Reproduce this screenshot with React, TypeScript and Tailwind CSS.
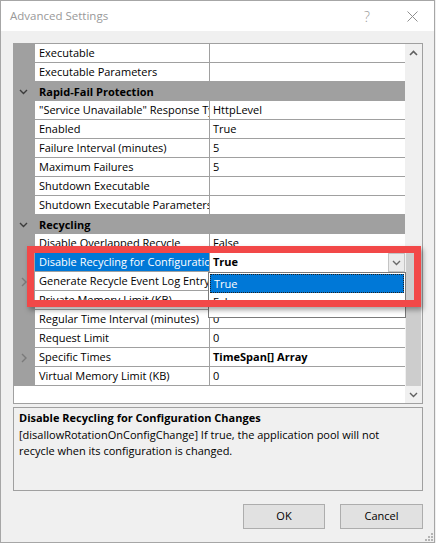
import React from "react";

type Row = {
  name: string;
  value?: string;
  header?: boolean;
  bold?: boolean;
  expand?: boolean;
  selected?: boolean;
};

// property grid rows, top to bottom
const rows: Row[] = [
  { name: "Executable", value: "" },
  { name: "Executable Parameters", value: "" },
  { name: "Rapid-Fail Protection", header: true },
  { name: '"Service Unavailable" Response Type', value: "HttpLevel" },
  { name: "Enabled", value: "True" },
  { name: "Failure Interval (minutes)", value: "5" },
  { name: "Maximum Failures", value: "5" },
  { name: "Shutdown Executable", value: "" },
  { name: "Shutdown Executable Parameters", value: "" },
  { name: "Recycling", header: true },
  { name: "Disable Overlapped Recycle", value: "False" },
  { name: "Disable Recycling for Configuration Changes", value: "True", selected: true },
  { name: "Generate Recycle Event Log Entry", value: "", expand: true },
  { name: "Private Memory Limit (KB)", value: "0" },
  { name: "Regular Time Interval (minutes)", value: "0" },
  { name: "Request Limit", value: "0" },
  { name: "Specific Times", value: "TimeSpan[] Array", bold: true, expand: true },
  { name: "Virtual Memory Limit (KB)", value: "0" },
];

const ChevronDown = ({ color = "#3c3c3c" }: { color?: string }) => (
  <svg width="9" height="6" viewBox="0 0 9 6">
    <polyline points="1,1 4.5,4.5 8,1" fill="none" stroke={color} strokeWidth="1.4" />
  </svg>
);

const ChevronUp = ({ color = "#606060" }: { color?: string }) => (
  <svg width="9" height="6" viewBox="0 0 9 6">
    <polyline points="1,5 4.5,1.5 8,5" fill="none" stroke={color} strokeWidth="1.6" />
  </svg>
);

const ChevronRight = () => (
  <svg width="6" height="10" viewBox="0 0 6 10">
    <polyline points="1,1 5,5 1,9" fill="none" stroke="#7a7a7a" strokeWidth="1.4" />
  </svg>
);

function GridRow({ row }: { row: Row }) {
  if (row.header) {
    return (
      <div className="flex h-[19px] items-center bg-[#a0a0a0]">
        <div className="flex w-[21px] shrink-0 justify-center pr-[3px]">
          <ChevronDown />
        </div>
        <div className="pl-[4px] font-bold leading-[18px] text-black">{row.name}</div>
      </div>
    );
  }
  return (
    <div className="flex h-[19px]">
      <div className="flex w-[21px] shrink-0 items-center justify-center bg-[#a0a0a0] pr-[2px]">
        {row.expand && <ChevronRight />}
      </div>
      <div
        className={`w-[174px] shrink-0 overflow-hidden whitespace-nowrap border-b border-[#a0a0a0] pl-[4px] leading-[18px] ${
          row.selected ? "bg-[#0078d7] text-white" : "bg-white text-black"
        }`}
      >
        {row.name}
      </div>
      {row.selected ? (
        <div className="flex w-[196px] shrink-0 border-l border-[#a0a0a0] bg-white">
          <div className="flex-1 pl-[3px] font-bold leading-[18px] text-black">{row.value}</div>
          <div className="mb-[-1px] flex h-[19px] w-[17px] items-center justify-center border border-[#c4c4c4] bg-[#ebebeb]">
            <ChevronDown color="#6a6a6a" />
          </div>
        </div>
      ) : (
        <div
          className={`w-[196px] shrink-0 overflow-hidden whitespace-nowrap border-b border-l border-[#a0a0a0] bg-white pl-[3px] leading-[18px] text-black ${
            row.bold ? "font-bold" : ""
          }`}
        >
          {row.value}
        </div>
      )}
    </div>
  );
}

export default function App() {
  return (
    <div className="h-[543px] w-[436px] overflow-hidden bg-[#f0f0f0] font-['Open_Sans',sans-serif] text-[11px]">
      <div className="relative flex h-[543px] w-[435px] flex-col border border-[#a6a6a6] bg-[#f0f0f0]">
        {/* title bar */}
        <div className="flex h-[30px] shrink-0 items-center bg-white pl-[9px]">
          <div className="flex-1 text-[11.5px] text-[#999999]">Advanced Settings</div>
          <div className="mr-[37px] text-[14px] font-light text-[#9a9a9a]">?</div>
          <svg width="11" height="11" viewBox="0 0 11 11" className="mr-[16px]">
            <line x1="0.5" y1="0.5" x2="10.5" y2="10.5" stroke="#8f8f8f" strokeWidth="1" />
            <line x1="10.5" y1="0.5" x2="0.5" y2="10.5" stroke="#8f8f8f" strokeWidth="1" />
          </svg>
        </div>

        <div className="flex flex-1 flex-col pl-[12px] pr-[11px] pt-[12px]">
          {/* property grid */}
          <div className="flex h-[361px] w-[410px] border border-[#a0a0a0] bg-white">
            <div className="flex w-[391px] flex-col">
              {rows.map((r) => (
                <GridRow key={r.name} row={r} />
              ))}
              <div className="flex-1 bg-white" />
            </div>
            <div className="flex w-[17px] flex-col bg-[#f0f0f0]">
              <div className="flex h-[17px] items-center justify-center">
                <ChevronUp />
              </div>
              <div className="h-[189px]" />
              <div className="mx-[1px] h-[136px] bg-[#cdcdcd]" />
              <div className="flex flex-1 items-center justify-center">
                <ChevronDown color="#606060" />
              </div>
            </div>
          </div>

          {/* description */}
          <div className="mt-[3px] h-[84px] w-[410px] border border-[#a0a0a0] bg-[#f0f0f0] px-[5px] pt-[1px] text-black">
            <div className="whitespace-nowrap font-bold leading-[18px]">
              Disable Recycling for Configuration Changes
            </div>
            <div className="whitespace-nowrap leading-[16px]">
              [disallowRotationOnConfigChange] If true, the application pool will not
            </div>
            <div className="whitespace-nowrap leading-[16px]">recycle when its configuration is changed.</div>
          </div>

          {/* buttons */}
          <div className="mt-[13px] flex w-[410px] justify-end gap-[15px]">
            <button className="h-[25px] w-[82px] border border-[#adadad] bg-[#e1e1e1] text-black">OK</button>
            <button className="h-[25px] w-[83px] border border-[#adadad] bg-[#e1e1e1] text-black">Cancel</button>
          </div>
        </div>

        {/* dropdown list of the active editor */}
        <div className="absolute left-[207px] top-[271px] h-[46px] w-[198px] border border-[#7a7a7a] bg-white text-[11px]">
          <div className="mx-[1px] mt-[1px] h-[19px] border border-dotted border-[#222] bg-[#0078d7] pl-[3px] leading-[17px] text-white">
            True
          </div>
          <div className="pl-[4px] leading-[18px] text-black">False</div>
        </div>

        {/* red highlight box */}
        <div className="absolute left-[26px] top-[245px] h-[61px] w-[394px] border-[7px] border-[#f24848] shadow-[2px_3px_5px_rgba(0,0,0,0.35)]" />

        {/* resize grip */}
        <svg width="9" height="9" viewBox="0 0 9 9" className="absolute bottom-[1px] right-[1px]">
          <rect x="7" y="1" width="2" height="2" fill="#b4b4b4" />
          <rect x="4" y="4" width="2" height="2" fill="#b4b4b4" />
          <rect x="7" y="4" width="2" height="2" fill="#b4b4b4" />
          <rect x="1" y="7" width="2" height="2" fill="#b4b4b4" />
          <rect x="4" y="7" width="2" height="2" fill="#b4b4b4" />
          <rect x="7" y="7" width="2" height="2" fill="#b4b4b4" />
        </svg>
      </div>
    </div>
  );
}
